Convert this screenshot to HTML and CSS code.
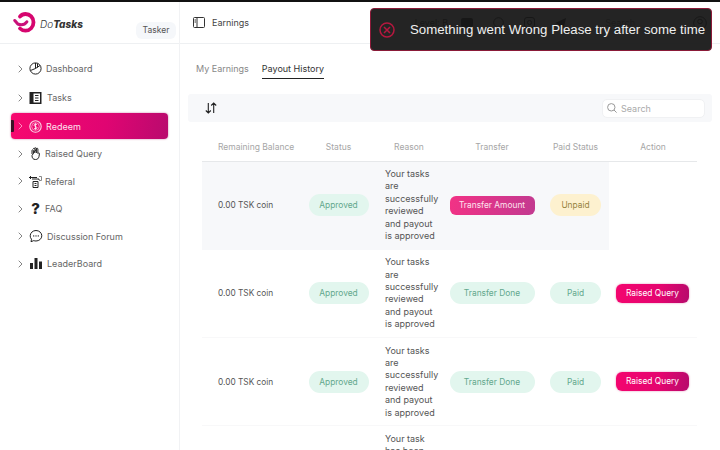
FILE: index.html
```html
<!DOCTYPE html>
<html lang="en">
<head>
  <meta charset="UTF-8" />
  <title>DoTasks - Earnings</title>
  <link rel="stylesheet" href="styles.css">
</head>
<body>
  <div class="app">
    <aside class="sidebar">
      <div class="brand">
        <svg class="brand-logo" width="23" height="21" viewBox="0 0 23 21" fill="none">
          <path d="M7 4.500C8.500 2.800 10.500 2 12.500 2C17 2 20.500 5.700 20.500 10.300C20.500 15 17 18.700 12.500 18.700C10.500 18.700 8.500 18 7 16.500" stroke="#d6066f" stroke-width="3.800" stroke-linecap="round"/>
          <path d="M1.800 8.500L4.800 12C7.500 13 11.500 13 13.800 9.800" stroke="#c9107a" stroke-width="3" stroke-linecap="round" stroke-linejoin="round"/>
        </svg>
        <span class="brand-name"><span class="brand-do">Do</span>Tasks</span>
        <span class="role">Tasker</span>
      </div>
      <nav class="nav">
        <a class="nav-item tall">
          <svg class="chev" width="5" height="8" viewBox="0 0 5 8" fill="none"><path d="M.7.700L4 4 .7 7.300" stroke="#777" stroke-width=".9"/></svg>
          <svg class="nav-icon" width="13" height="13" viewBox="0 0 13 13" fill="none" stroke="#222" stroke-width="1"><circle cx="6.500" cy="6.500" r="5.600"/><path d="M6.500 1v5.500L1.500 8.500M6.500 6.500L11 3.500M8.500 1.500v4"/></svg>
          <span class="nav-text gap-4">Dashboard</span>
        </a>
        <a class="nav-item tall">
          <svg class="chev" width="5" height="8" viewBox="0 0 5 8" fill="none"><path d="M.7.700L4 4 .7 7.300" stroke="#777" stroke-width=".9"/></svg>
          <svg class="nav-icon" width="12" height="12" viewBox="0 0 12 12"><path d="M0 0h12v12H0z" fill="#222"/><path d="M4 1.500h6.500v9H4z" fill="#fff"/><path d="M5.500 3.500h3.500M5.500 6h3.500M5.500 8.500h3.500" stroke="#222" stroke-width="1"/></svg>
          <span class="nav-text gap-5">Tasks</span>
        </a>
        <a class="nav-item active">
          <svg class="chev" width="5" height="8" viewBox="0 0 5 8" fill="none"><path d="M.7.700L4 4 .7 7.300" stroke="#ff9dc8" stroke-width=".9"/></svg>
          <svg class="nav-icon" width="13" height="13" viewBox="0 0 13 13" fill="none"><circle cx="6.500" cy="6.500" r="5.700" stroke="#fbd5e6" stroke-width="1.100"/><circle cx="6.500" cy="6.500" r="3.800" stroke="#fbd5e6" stroke-width=".6"/><path d="M8 4.800C7 3.900 5.100 4 5.100 5.300S8 6.400 8 7.700 6 9.100 5 8.200M6.500 3.300v6.400" stroke="#fff" stroke-width=".8"/></svg>
          <span class="nav-text gap-4">Redeem</span>
        </a>
        <a class="nav-item">
          <svg class="chev" width="5" height="8" viewBox="0 0 5 8" fill="none"><path d="M.7.700L4 4 .7 7.300" stroke="#777" stroke-width=".9"/></svg>
          <svg class="nav-icon" width="11" height="13" viewBox="0 0 11 13" fill="none" stroke="#222" stroke-width="1" stroke-linejoin="round"><path d="M2 7V3.500c0-1 1.400-1 1.400 0V6m0-4c0-1.200 1.500-1.200 1.500 0V6m0-4.500c0-1 1.500-1 1.500 0V6m0-4c0-1 1.500-1 1.500 0v4.500c.6-1 2-.5 1.500.5L9 9.500c-.5 2-1.500 3-3.500 3-2.500 0-3.500-1.500-3.500-4z"/></svg>
          <span class="nav-text gap-3">Raised Query</span>
        </a>
        <a class="nav-item">
          <svg class="chev" width="5" height="8" viewBox="0 0 5 8" fill="none"><path d="M.7.700L4 4 .7 7.300" stroke="#777" stroke-width=".9"/></svg>
          <svg class="nav-icon" width="13" height="13" viewBox="0 0 13 13" fill="none" stroke="#222" stroke-width="1"><path d="M0 2.500h8M2 1L.5 2.500 2 4M3 4h7v1M4 6.500h5v6H4zM5.500 8.500h2M5.500 10.500h2"/><path d="M10 1.500h2.500v4H10" stroke="#888"/></svg>
          <span class="nav-text gap-3">Referal</span>
        </a>
        <a class="nav-item">
          <svg class="chev" width="5" height="8" viewBox="0 0 5 8" fill="none"><path d="M.7.700L4 4 .7 7.300" stroke="#777" stroke-width=".9"/></svg>
          <span class="nav-icon faq-icon">?</span>
          <span class="nav-text gap-3">FAQ</span>
        </a>
        <a class="nav-item">
          <svg class="chev" width="5" height="8" viewBox="0 0 5 8" fill="none"><path d="M.7.700L4 4 .7 7.300" stroke="#777" stroke-width=".9"/></svg>
          <svg class="nav-icon wide" width="14" height="14" viewBox="0 0 14 14" fill="none"><path d="M7 1.500c3.200 0 5.800 2.400 5.800 5.300S10.200 12 7 12c-.8 0-1.500-.1-2.200-.4L2 12.700l.5-2.500C1.600 9.300 1.200 8.100 1.200 6.800 1.200 3.900 3.800 1.500 7 1.500z" stroke="#222" stroke-width="1"/><circle cx="4.700" cy="6.900" r=".7" fill="#222"/><circle cx="7" cy="6.900" r=".7" fill="#222"/><circle cx="9.300" cy="6.900" r=".7" fill="#222"/></svg>
          <span class="nav-text gap-4">Discussion Forum</span>
        </a>
        <a class="nav-item">
          <svg class="chev" width="5" height="8" viewBox="0 0 5 8" fill="none"><path d="M.7.700L4 4 .7 7.300" stroke="#777" stroke-width=".9"/></svg>
          <svg class="nav-icon wide" width="12" height="11" viewBox="0 0 12 11" fill="#222"><path d="M0 5h3v6H0zM4.500 0h3v11h-3zM9 3.500h3V11H9z"/></svg>
          <span class="nav-text gap-4">LeaderBoard</span>
        </a>
      </nav>
    </aside>

    <div class="main">
      <header class="topbar">
        <svg width="12" height="11" viewBox="0 0 12 11" fill="none" stroke="#333" stroke-width="1"><rect x=".5" y=".5" width="11" height="10" rx="1"/><path d="M4 .5v10M1.500 3h1.500M1.500 5h1.500"/></svg>
        <span class="page-title">Earnings</span>
        <div class="top-tools">
          <span class="level">Level: B</span>
          <svg width="12" height="9" viewBox="0 0 12 9"><rect width="12" height="9" rx="2" fill="#222"/></svg>
          <svg width="11" height="11" viewBox="0 0 11 11" fill="none" stroke="#222"><circle cx="5.500" cy="5.500" r="4.800"/></svg>
          <svg width="11" height="11" viewBox="0 0 11 11" fill="none" stroke="#222"><rect x=".5" y=".5" width="10" height="10" rx="2.500"/><circle cx="5.500" cy="5.500" r="2"/></svg>
          <svg width="11" height="10" viewBox="0 0 11 10" fill="#222"><path d="M11 0L0 5l3 1 1 4 2-3 3 2z"/></svg>
          <span class="top-search">Search</span>
          <svg class="user-icon" width="14" height="14" viewBox="0 0 14 14" fill="none" stroke="#222"><circle cx="7" cy="7" r="6.300"/><circle cx="7" cy="5.500" r="2.300"/></svg>
        </div>
      </header>

      <div class="content">
        <div class="tabs">
          <span class="tab">My Earnings</span>
          <span class="tab tab-active">Payout History</span>
        </div>

        <div class="toolbar">
          <svg width="12" height="12" viewBox="0 0 12 12" fill="none" stroke="#222" stroke-width="1.100"><path d="M3.300 1v10M.8 8.500l2.500 2.500 2.500-2.500M8.700 11V1M6.200 3.500L8.700 1l2.500 2.500"/></svg>
          <div class="search-box">
            <svg width="10" height="10" viewBox="0 0 10 10" fill="none" stroke="#999" stroke-width="1"><circle cx="4.300" cy="4.300" r="3.700"/><path d="M7 7l2.600 2.600"/></svg>
            <span>Search</span>
          </div>
        </div>

        <table class="payouts">
          <colgroup>
            <col class="col-balance"><col class="col-status"><col class="col-reason"><col class="col-transfer"><col class="col-paid"><col class="col-action">
          </colgroup>
          <thead>
            <tr>
              <th class="balance-head">Remaining Balance</th>
              <th>Status</th>
              <th>Reason</th>
              <th>Transfer</th>
              <th>Paid Status</th>
              <th>Action</th>
            </tr>
          </thead>
          <tbody>
            <tr class="row-tinted">
              <td class="balance">0.00 TSK coin</td>
              <td><span class="pill pill-green pill-status">Approved</span></td>
              <td class="reason">Your tasks are successfully reviewed and payout is approved</td>
              <td><span class="btn btn-transfer">Transfer Amount</span></td>
              <td><span class="pill pill-yellow">Unpaid</span></td>
              <td class="no-tint"></td>
            </tr>
            <tr>
              <td class="balance">0.00 TSK coin</td>
              <td><span class="pill pill-green pill-status">Approved</span></td>
              <td class="reason">Your tasks are successfully reviewed and payout is approved</td>
              <td><span class="pill pill-green pill-done">Transfer Done</span></td>
              <td><span class="pill pill-green pill-paid">Paid</span></td>
              <td class="action"><span class="btn btn-query">Raised Query</span></td>
            </tr>
            <tr>
              <td class="balance">0.00 TSK coin</td>
              <td><span class="pill pill-green pill-status">Approved</span></td>
              <td class="reason">Your tasks are successfully reviewed and payout is approved</td>
              <td><span class="pill pill-green pill-done">Transfer Done</span></td>
              <td><span class="pill pill-green pill-paid">Paid</span></td>
              <td class="action"><span class="btn btn-query">Raised Query</span></td>
            </tr>
            <tr>
              <td class="balance"></td>
              <td></td>
              <td class="reason">Your task has been reviewed and the payout is pending</td>
              <td></td>
              <td></td>
              <td></td>
            </tr>
          </tbody>
        </table>
      </div>
    </div>
  </div>

  <div class="toast">
    <svg width="16" height="16" viewBox="0 0 16 16" fill="none" stroke="#b5183f" stroke-width="1.500"><circle cx="8" cy="8" r="7"/><path d="M5 5l6 6M11 5l-6 6"/></svg>
    <span>Something went Wrong Please try after some time</span>
  </div>
</body>
</html>
```

FILE: styles.css
```css
* {
  box-sizing: border-box;
  margin: 0;
  padding: 0;
}

html, body {
  height: 100%;
  overflow: hidden;
}

body {
  font-family: 'Inter', sans-serif;
  font-size: 9px;
  color: #444;
  background: #fff;
  border-top: 2px solid #111;
}

.app {
  display: flex;
  height: 100%;
}

/* sidebar */
.sidebar {
  width: 180px;
  flex-shrink: 0;
  border-right: 1px solid #f1f2f4;
}

.brand {
  height: 42px;
  display: flex;
  align-items: flex-start;
  padding: 10px 3px 0 13px;
  border-bottom: 1px solid #eef0f2;
}

.brand-logo {
  flex-shrink: 0;
}

.brand-name {
  margin: 6px 0 0 4px;
  font-size: 10px;
  font-weight: 800;
  font-style: italic;
  color: #333;
}

.brand-do {
  font-weight: 300;
}

.role {
  margin: 10px 0 0 auto;
  width: 40px;
  height: 17px;
  line-height: 17px;
  text-align: center;
  font-size: 8.500px;
  color: #555;
  background: #f5f7fa;
  border-radius: 6px;
}

.nav {
  padding: 10px 11px 0;
}

.nav-item {
  position: relative;
  display: flex;
  align-items: center;
  height: 27.500px;
  padding-left: 7px;
  color: #666;
  font-size: 9px;
}

.nav-item.tall {
  height: 29px;
}

.nav-item.active {
  height: 26px;
  margin: 1px 0;
  color: #fde3ee;
  border-radius: 4px;
  background: linear-gradient(100deg, #f7086f, #e00572 60%, #b90a6e);
  box-shadow: 0 0 2px rgba(160, 10, 90, .6);
}

/* dark notch on the left edge of the selected item */
.nav-item.active::before {
  content: "";
  position: absolute;
  left: 0;
  top: 7px;
  width: 3px;
  height: 12px;
  background: #3a1226;
  border-radius: 0 1px 1px 0;
}

.chev {
  flex-shrink: 0;
  margin-right: 6px;
}

.nav-icon {
  flex-shrink: 0;
  width: 13px;
  display: block;
}

.nav-icon.wide {
  width: 14px;
}

.faq-icon {
  font-size: 15px;
  line-height: 15px;
  font-weight: 800;
  color: #222;
  text-align: center;
}

.gap-3 { margin-left: 3px; }
.gap-4 { margin-left: 4px; }
.gap-5 { margin-left: 5px; }

/* top bar */
.main {
  flex: 1;
  min-width: 0;
}

.topbar {
  height: 42px;
  display: flex;
  align-items: center;
  padding: 0 13px;
  border-bottom: 1px solid #eef0f2;
}

.page-title {
  margin-left: 7px;
  color: #444;
}

.top-tools {
  margin-left: auto;
  display: flex;
  align-items: center;
  gap: 20px;
  color: #333;
}

.level {
  margin-right: -7px;
}

.top-search {
  margin-left: 19px;
  color: #777;
}

.user-icon {
  margin-left: 38px;
}

/* content */
.content {
  padding: 0 8px;
}

.tabs {
  display: flex;
  gap: 13px;
  padding: 15px 0 0 8px;
}

.tab {
  height: 20px;
  padding-top: 4px;
  color: #888;
}

.tab-active {
  color: #333;
  border-bottom: 1px solid #222;
}

.toolbar {
  display: flex;
  align-items: center;
  justify-content: space-between;
  width: 524px;
  height: 28px;
  margin-top: 15px;
  padding: 0 7px 0 17px;
  background: #f7f8fa;
  border-radius: 3px;
}

.search-box {
  display: flex;
  align-items: center;
  gap: 4px;
  width: 103px;
  height: 19px;
  padding-left: 4px;
  background: #fff;
  border: 1px solid #f0f1f3;
  border-radius: 5px;
  color: #aaa;
}

.payouts {
  width: 495px;
  margin: 11px 0 0 14px;
  table-layout: fixed;
  border-collapse: collapse;
}

.col-balance { width: 99px; }
.col-status { width: 75px; }
.col-reason { width: 66px; }
.col-transfer { width: 100px; }
.col-paid { width: 67px; }
.col-action { width: 88px; }

.payouts th {
  height: 28px;
  font-size: 8.500px;
  font-weight: 400;
  color: #a6a6a6;
  text-align: center;
  border-bottom: 1px solid #e6e8ea;
}

.payouts th.balance-head {
  text-align: left;
  padding-left: 16px;
  white-space: nowrap;
}

.payouts td {
  height: 88.300px;
  text-align: center;
  border-bottom: 1px solid #f8f8f9;
  font-size: 8.400px;
  color: #555;
}

.payouts td.balance {
  text-align: left;
  padding-left: 16px;
  white-space: nowrap;
  font-size: 8.300px;
}

.payouts td.reason {
  text-align: left;
  padding: 0 6px 0 9px;
  font-size: 9px;
  line-height: 12.400px;
}

.payouts td.action {
  padding-right: 1px;
}

.row-tinted td {
  background: #f7f8fa;
  border-bottom-color: #f7f8fa;
}

.row-tinted td.no-tint {
  background: #fff;
  border-bottom-color: #fff;
}

.pill {
  display: inline-block;
  height: 22px;
  line-height: 22px;
  border-radius: 11px;
  text-align: center;
}

.pill-green {
  background: #e2f6ee;
  color: #62a88d;
}

.pill-yellow {
  width: 51px;
  background: #fdf1cf;
  color: #97833f;
}

.pill-status { width: 60px; }
.pill-done { width: 85px; }
.pill-paid { width: 51px; }

.btn {
  display: inline-block;
  height: 19px;
  line-height: 18px;
  border-radius: 6px;
  text-align: center;
  vertical-align: middle;
}

.btn-transfer {
  width: 85px;
  color: #fde3ee;
  background: linear-gradient(100deg, #f23285, #c23a90);
}

.btn-query {
  width: 73px;
  color: #fff;
  background: linear-gradient(100deg, #f4056f, #e4056f 60%, #b60a6c);
  box-shadow: 0 0 2px rgba(200, 10, 100, .5);
}

/* toast sits over the header */
.toast {
  position: absolute;
  top: 8px;
  left: 370px;
  width: 342px;
  height: 43px;
  display: flex;
  align-items: center;
  padding-left: 8px;
  background: rgba(22, 22, 22, .94);
  border: 1px solid #8a1a38;
  border-radius: 4px;
  color: #f0f0f0;
  font-family: 'Liberation Sans', sans-serif;
  font-size: 13.250px;
  white-space: nowrap;
}

.toast span {
  margin-left: 15px;
}
```
